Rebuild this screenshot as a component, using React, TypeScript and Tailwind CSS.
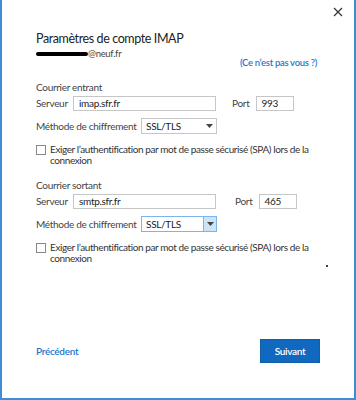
import React from "react";

const font = { fontFamily: 'Lato, "Noto Sans", sans-serif' };

function Arrow() {
  return (
    <svg width="7" height="4" viewBox="0 0 7 4" aria-hidden>
      <path d="M0 0h7L3.5 4z" fill="#444" />
    </svg>
  );
}

function Section({
  title,
  server,
  port,
  portGap,
  focused,
}: {
  title: string;
  server: string;
  port: string;
  portGap: string;
  focused?: boolean;
}) {
  return (
    <div className="flex flex-col whitespace-nowrap text-[10px] tracking-[-0.3px]">
      <p className="h-[14px] leading-[14px] text-[#444]">{title}</p>
      <div className="mt-[2px] flex h-[15px] items-center">
        <span className="w-[37px] text-[#444]">Serveur</span>
        <div className="flex h-[15px] w-[143px] items-center border border-[#c6c6c6] pl-[5px] text-[#222]">
          {server}
        </div>
        <span className={`${portGap} text-[#444]`}>Port</span>
        <div className="ml-[7px] flex h-[15px] w-[38px] items-center border border-[#c6c6c6] pl-[4px] text-[#222]">
          {port}
        </div>
      </div>
      <div className="mt-[7px] flex h-[16px] items-center">
        <span className="w-[105px] text-[#444]">Méthode de chiffrement</span>
        <div
          className={
            focused
              ? "flex h-[16px] w-[76px] items-stretch border border-[#7eb4ea]"
              : "flex h-[16px] w-[76px] items-stretch border border-[#c6c6c6]"
          }
        >
          <span className="flex flex-1 items-center pl-[4px] text-[#222]">SSL/TLS</span>
          <span
            className={
              focused
                ? "flex w-[13px] items-center justify-center border-l border-[#7eb4ea] bg-[#cce4f7]"
                : "flex w-[13px] items-center justify-center"
            }
          >
            <Arrow />
          </span>
        </div>
      </div>
      <div className="mt-[10px] flex items-start">
        <span className="mt-[1px] h-[10px] w-[10px] shrink-0 border border-[#888]" />
        <p className="ml-[4px] leading-[11px] tracking-[-0.4px] text-[#333]">
          Exiger l’authentification par mot de passe sécurisé (SPA) lors de la
          <br />
          connexion
        </p>
      </div>
    </div>
  );
}

export default function App() {
  return (
    <div
      style={font}
      className="flex h-[400px] w-[356px] flex-col border-x-2 border-b-2 border-[#3f8dd4] bg-white"
    >
      <div className="flex h-[24px] items-center justify-end pr-[10px]">
        <svg width="12" height="12" viewBox="0 0 12 12" aria-hidden>
          <path d="M2 2l8 8M10 2l-8 8" stroke="#333" strokeWidth="1.2" />
        </svg>
      </div>
      <div className="flex flex-col pl-[34px] pr-[34px]">
        <h1 className="mt-[6px] h-[18px] whitespace-nowrap text-[12.5px] leading-[18px] tracking-[-0.4px] text-[#222]">
          Paramètres de compte IMAP
        </h1>
        <div className="flex items-start justify-between whitespace-nowrap pr-[3px] tracking-[-0.3px]">
          <div className="flex h-[12px] items-center">
            <span className="h-[4px] w-[52px] rounded-full bg-black" />
            <span className="text-[9.5px] leading-[12px] text-[#444]">@neuf.fr</span>
          </div>
          <span className="mt-[9px] text-[9.5px] font-semibold leading-[12px] text-[#1a79d0]">
            (Ce n’est pas vous ?)
          </span>
        </div>
        <div className="mt-[11px]">
          <Section title="Courrier entrant" server="imap.sfr.fr" port="993" portGap="ml-[16px]" />
        </div>
        <div className="mt-[12px]">
          <Section title="Courrier sortant" server="smtp.sfr.fr" port="465" portGap="ml-[19px]" focused />
        </div>
        <div className="mt-[1px] flex h-[2px] justify-end">
          <span className="-mr-[8px] h-[2px] w-[2px] rounded-full bg-black" />
        </div>
        <div className="mt-[72px] flex h-[24px] items-center justify-between tracking-[-0.3px]">
          <span className="text-[10px] font-semibold text-[#1a79d0]">Précédent</span>
          <button className="h-[24px] w-[60px] border border-[#0f5fa8] bg-[#1068bf] text-[10px] font-semibold text-white">
            Suivant
          </button>
        </div>
      </div>
    </div>
  );
}
